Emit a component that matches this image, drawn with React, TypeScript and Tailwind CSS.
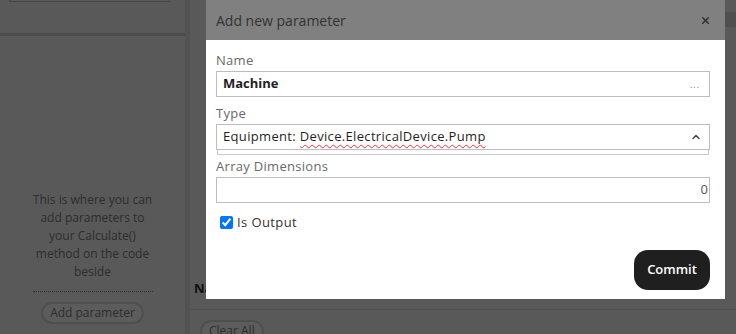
import { X, ChevronUp } from "lucide-react";

function Field({ label, children }: { label: string; children: React.ReactNode }) {
  return (
    <div className="flex flex-col">
      <label className="text-[13px] leading-[18px] tracking-[0.3px] text-[#696969]">{label}</label>
      {children}
    </div>
  );
}

export default function App() {
  return (
    <div className="relative h-[334px] w-[736px] overflow-hidden bg-[#595959] font-['Open_Sans',sans-serif]">
      <div className="flex h-full">
        {/* left panel */}
        <aside className="flex w-[185px] flex-col">
          <div className="h-[33px] px-[9px]">
            <div className="-mt-[30px] h-[32px] w-[161px] border border-[#454545]" />
          </div>
          <div className="h-[3px] bg-[#4d4d4d]" />
          <div className="flex flex-1 flex-col items-center pt-[155px]">
            <p className="w-[130px] text-center text-[12px] leading-[18px] text-[#2d2d2d]">
              This is where you can add parameters to your Calculate() method on the code beside
            </p>
            <div className="mt-[10px] w-[120px] border-t border-dotted border-[#303030]" />
            <button className="mt-[10px] rounded-full border-2 border-[#4f4f4f] bg-[#5c5c5c] px-[7px] py-[1px] text-[12px] leading-[16px] text-[#2d2d2d]">
              Add parameter
            </button>
          </div>
        </aside>
        <div className="w-[5px] bg-[#525252]" />
        {/* main area */}
        <main className="flex flex-1 flex-col">
          <div className="mt-[12px] flex justify-end">
            <div className="h-[15px] w-[40px] bg-[#4f4f4f]" />
          </div>
          <div className="flex-1" />
          <div className="pl-[4px] text-[13px] font-bold leading-[18px] text-[#111]">Name</div>
          <div className="mt-[12px] h-px bg-[#515151]" />
          <div className="-mb-[8px] pl-[10px] pt-[7px]">
            <button className="rounded-full border-2 border-[#4f4f4f] bg-[#5c5c5c] px-[7px] py-[1px] text-[12px] leading-[16px] text-[#2d2d2d]">
              Clear All
            </button>
          </div>
        </main>
      </div>

      {/* modal */}
      <div className="absolute left-[206px] top-0 flex w-[519px] flex-col">
        <div className="flex h-[40px] items-center justify-between bg-[#808080] pl-[10px] pr-[14px]">
          <span className="text-[14px] text-[#333]">Add new parameter</span>
          <X className="h-[11px] w-[11px] text-[#333]" strokeWidth={3.5} />
        </div>
        <div className="flex flex-col bg-white pb-[9px] pl-[10px] pr-[15px] pt-[11px]">
          <Field label="Name">
            <div className="mt-[2px] flex h-[26px] items-center justify-between border border-[#bdbdbd] pl-[6px] pr-[9px]">
              <span className="text-[13px] font-bold text-[#1f1f1f]">Machine</span>
              <span className="text-[9px] leading-none tracking-[1px] text-[#777]">...</span>
            </div>
          </Field>
          <div className="mt-[7px]">
            <Field label="Type">
              <div className="mt-[2px] flex h-[26px] items-center justify-between border border-[#bdbdbd] pl-[6px] pr-[7px]">
                <span className="text-[13px] tracking-[0.33px] text-[#1f1f1f]">
                  Equipment:{" "}
                  <span className="underline decoration-red-500 decoration-wavy decoration-1 underline-offset-[3px]">
                    Device.ElectricalDevice.Pump
                  </span>
                </span>
                <ChevronUp className="h-[12px] w-[12px] text-[#444]" strokeWidth={3} />
              </div>
              <div className="mx-px h-[5px] border border-t-0 border-[#c8c8c8]" />
            </Field>
          </div>
          <div className="mt-[2px]">
            <Field label="Array Dimensions">
              <div className="mt-[2px] flex h-[26px] items-center justify-end border border-[#bdbdbd] pr-px">
                <span className="text-[13px] text-[#555]">0</span>
              </div>
            </Field>
          </div>
          <label className="mt-[10px] flex items-center gap-[4px] pl-[4px] text-[13px] leading-[18px] tracking-[0.4px] text-[#333]">
            <input type="checkbox" defaultChecked className="m-0 h-[13px] w-[13px] accent-[#0075ff]" />
            Is Output
          </label>
          <div className="mt-[19px] flex justify-end">
            <button className="h-[40px] w-[76px] rounded-[14px] bg-[#1f1f1f] text-[13px] font-semibold text-white">
              Commit
            </button>
          </div>
        </div>
      </div>
    </div>
  );
}
